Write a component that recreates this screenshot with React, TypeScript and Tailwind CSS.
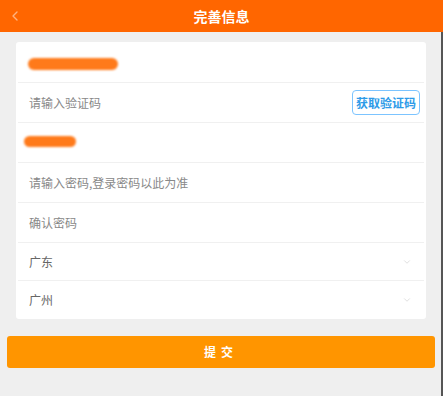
import { ChevronDown, ChevronLeft } from "lucide-react"

const font = { fontFamily: '"Noto Sans CJK SC", "Noto Sans", sans-serif' }

function Blob({ w, h }: { w: string; h: string }) {
  return <span className={`inline-block ${w} ${h} rounded-full bg-[#ff7a1a] blur-[1px]`} />
}

export default function App() {
  const rows = [
    { kind: "blob1", h: "h-[41px]" },
    { kind: "code", text: "请输入验证码", h: "h-10" },
    { kind: "blob2", h: "h-10" },
    { kind: "text", text: "请输入密码,登录密码以此为准", h: "h-10" },
    { kind: "text", text: "确认密码", h: "h-10" },
    { kind: "select", text: "广东", h: "h-[38px]" },
    { kind: "select", text: "广州", h: "h-[38px]" },
  ]

  return (
    <div className="w-[443px] h-[396px] bg-[#efefef] overflow-hidden" style={font}>
      <div className="h-8 bg-[#ff6600] flex items-center relative">
        <ChevronLeft className="absolute left-[7px] top-[8px] w-4 h-4 text-[#ffb27f]" strokeWidth={2} />
        <div className="flex-1 text-center text-white text-[14px] font-bold leading-none">完善信息</div>
      </div>
      <div className="h-[364px] border-r-2 border-[#555] pt-[10px]">
        <div className="mx-4 w-[410px] bg-white rounded-[3px]">
          {rows.map((row, i) => (
            <div
              key={i}
              className={`mx-[2px] ${row.h} flex items-center pl-[11px] pr-[4px] ${i < rows.length - 1 ? "border-b border-[#f0f0f0]" : ""}`}
            >
              {row.kind === "blob1" && (
                <div className="ml-[-1px] mt-[1px]">
                  <Blob w="w-[90px]" h="h-[12px]" />
                </div>
              )}
              {row.kind === "blob2" && (
                <div className="ml-[-5px] mt-[-6px]">
                  <Blob w="w-[52px]" h="h-[11px]" />
                </div>
              )}
              {row.kind === "text" && <span className="text-[12px] text-[#888]">{row.text}</span>}
              {row.kind === "code" && (
                <>
                  <span className="flex-1 text-[12px] text-[#888]">{row.text}</span>
                  <span className="px-[3px] h-[25px] flex items-center border border-[#7cc4ff] rounded-[4px] text-[12px] font-semibold text-[#2e9be8]">
                    获取验证码
                  </span>
                </>
              )}
              {row.kind === "select" && (
                <>
                  <span className="flex-1 text-[12px] text-[#666]">{row.text}</span>
                  <ChevronDown className="w-[10px] h-[10px] text-[#ccc] mr-[8px]" strokeWidth={1.5} />
                </>
              )}
            </div>
          ))}
        </div>
        <button className="mt-[17px] ml-[7px] w-[428px] h-8 bg-[#ff9500] rounded-[3px] text-white text-[12px] font-bold tracking-[5px]">
          提交
        </button>
      </div>
    </div>
  )
}
